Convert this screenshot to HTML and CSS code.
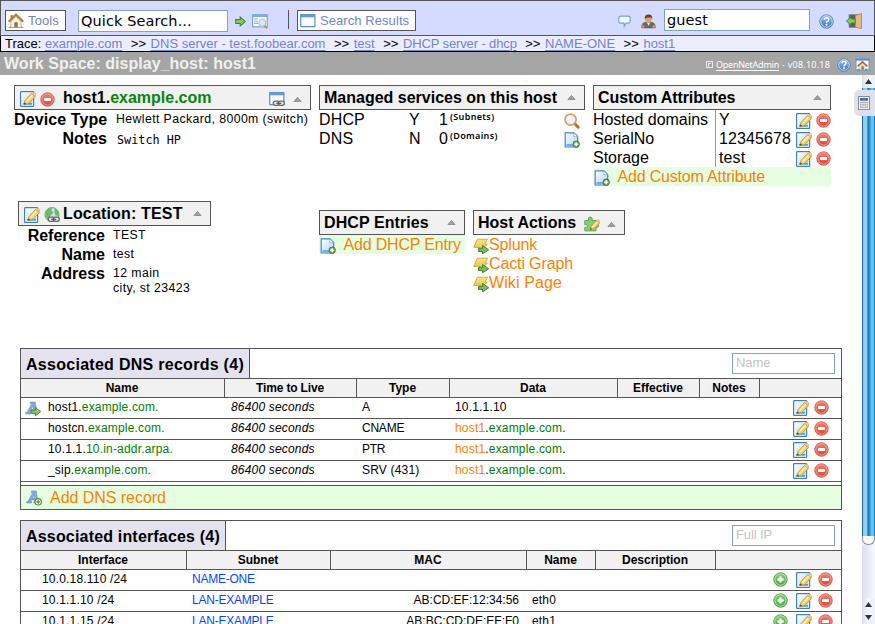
FILE: index.html
```html
<!DOCTYPE html>
<html lang="en">
<head>
<meta charset="utf-8">
<title>Work Space: display_host: host1</title>
<link rel="stylesheet" href="styles.css">
</head>
<body>
<svg class="defs" width="0" height="0">
  <defs>
    <linearGradient id="g-red" x1="0" y1="0" x2="0" y2="1"><stop offset="0" stop-color="#f0816f"/><stop offset="1" stop-color="#dd4437"/></linearGradient>
    <linearGradient id="g-green" x1="0" y1="0" x2="0" y2="1"><stop offset="0" stop-color="#8ccf78"/><stop offset="1" stop-color="#46a13b"/></linearGradient>
    <linearGradient id="g-blue" x1="0" y1="0" x2="0" y2="1"><stop offset="0" stop-color="#8fbbe9"/><stop offset="1" stop-color="#3c78bd"/></linearGradient>
    <linearGradient id="g-page" x1="0" y1="0" x2="1" y2="1"><stop offset="0" stop-color="#ffffff"/><stop offset="1" stop-color="#a8d4fa"/></linearGradient>
    <linearGradient id="g-gold" x1="0" y1="0" x2="0" y2="1"><stop offset="0" stop-color="#fbe680"/><stop offset="1" stop-color="#e6b93a"/></linearGradient>
    <symbol id="pencil" viewBox="0 0 16 16">
      <path d="M4 13.6 5 9.6 11.6 2.4 15.4 5.6 8.6 12.6Z" fill="#f7d262" stroke="#c28d2e" stroke-width=".8"/>
      <path d="M6.6 10.6 12.8 4" stroke="#fdf2b8" stroke-width="1.4"/>
      <path d="M11.6 2.4 12.6 1.4Q14 .8 15.5 2.4 16.6 4.2 15.4 5.6Z" fill="#f6c69a" stroke="#c9a06a" stroke-width=".5"/>
      <path d="M4 13.6 4.6 11.4 6.2 13Z" fill="#333"/>
    </symbol>
    <symbol id="edit" viewBox="0 0 16 16">
      <rect x=".6" y=".6" width="13" height="14.8" rx=".6" fill="#fff" stroke="#3f7fca" stroke-width="1.2"/>
      <rect x="2" y="2" width="10.4" height="12" fill="url(#g-page)"/>
      <path d="M3 12.8H12" stroke="#3ba3ee" stroke-width="1.6"/>
      <use href="#pencil"/>
    </symbol>
    <symbol id="del" viewBox="0 0 16 16">
      <circle cx="8" cy="8" r="7.2" fill="url(#g-red)" stroke="#cd5548" stroke-width=".9"/>
      <circle cx="8" cy="8" r="6" fill="none" stroke="#f7b1a6" stroke-width=".8"/>
      <rect x="4.3" y="6.5" width="7.4" height="3" rx=".4" fill="#fff"/>
    </symbol>
    <symbol id="add" viewBox="0 0 16 16">
      <circle cx="8" cy="8" r="7.2" fill="url(#g-green)" stroke="#4c9846" stroke-width=".9"/>
      <circle cx="8" cy="8" r="6" fill="none" stroke="#c3e9b8" stroke-width=".9"/>
      <path d="M8 4.7V11.3M4.7 8H11.3" stroke="#fff" stroke-width="2.5"/>
    </symbol>
    <symbol id="page-add" viewBox="0 0 16 16">
      <path d="M1.2.8H10L13.7 4.5V15H1.2Z" fill="url(#g-page)" stroke="#4b83c4" stroke-width="1.2"/>
      <path d="M9.8 1V4.7H13.5" fill="#fff" stroke="#7ba8da" stroke-width=".8"/>
      <path d="M2.5 13H9" stroke="#3ba3ee" stroke-width="1.5"/>
      <circle cx="12.2" cy="12.2" r="3.2" fill="#76a548" stroke="#48752a" stroke-width=".9"/>
      <path d="M12.2 10.2V14.2M10.2 12.2H14.2" stroke="#fff" stroke-width="1.5"/>
    </symbol>
    <symbol id="chain" viewBox="0 0 16 16">
      <rect x="4.3" y="10.2" width="6" height="4.2" rx="2.1" fill="#eee" stroke="#666" stroke-width="1.3"/>
      <rect x="9.3" y="10.2" width="6" height="4.2" rx="2.1" fill="#eee" stroke="#666" stroke-width="1.3"/>
      <path d="M7.3 12.3H12.3" stroke="#555" stroke-width="1.3"/>
    </symbol>
    <symbol id="window" viewBox="0 0 16 16">
      <rect x=".7" y="1.7" width="14.2" height="12" rx=".4" fill="#f8fbff" stroke="#5b8fd0" stroke-width="1.2"/>
      <rect x=".5" y="1.3" width="14.6" height="3" fill="#6599dc"/>
    </symbol>
    <symbol id="window-link" viewBox="0 0 16 16"><use href="#window"/><use href="#chain"/></symbol>
    <symbol id="globe" viewBox="0 0 16 16">
      <circle cx="8" cy="7.6" r="7" fill="#c4e4f0" stroke="#5da35c" stroke-width="1"/>
      <path d="M1.5 5Q3.6 1 8 .9L7.4 3.4 9.5 5.5 6.6 8.5 4.4 12.8Q.6 9.8 1.5 5ZM10.5 1.3Q15.6 4 14.8 9L11.5 8.5 10.5 5.5Z" fill="#6fbb66"/>
      <use href="#chain"/>
    </symbol>
    <symbol id="lens" viewBox="0 0 16 16">
      <path d="M10.8 10.8 14.2 14.2" stroke="#b9732f" stroke-width="3" stroke-linecap="round"/>
      <circle cx="6.6" cy="6.6" r="5.5" fill="#eaf1f9" stroke="#d6a163" stroke-width="1.7"/>
      <path d="M3.6 6.5Q4 3.6 7 3.5" fill="none" stroke="#fff" stroke-width="1.3"/>
    </symbol>
    <symbol id="go" viewBox="0 0 16 16">
      <path d="M1 5H7.5V1.4L15 8 7.5 14.6V11H1Z" fill="#86c862" stroke="#3c8535" stroke-width="1.5"/>
    </symbol>
    <symbol id="bolt" viewBox="0 0 16 16">
      <path d="M4.4 1.2H14.6L12 6.2H14.4L5.6 13.8 7 9.4H.8Z" fill="url(#g-gold)" stroke="#cba53a" stroke-width=".9"/>
      <path d="M5.6 10.3H9.6V7.5L15.7 11.8 9.6 15.8V13.4H5.6Z" fill="#7dbb5c" stroke="#3f7f35" stroke-width="1"/>
    </symbol>
    <symbol id="letter" viewBox="0 0 16 16">
      <path d="M5.4 1H10.3L11.9 11.3H12.8V13H7.9V11.4H9L8.8 9.9H5.5L4.7 11.4H5.7V13H.6V11.4H1.8L6.8 2.7H5.4ZM6.5 8.1H8.6L8.1 4.9Z" fill="#81a9de" fill-rule="evenodd" stroke="#6a95d0" stroke-width=".6"/>
    </symbol>
    <symbol id="a-go" viewBox="0 0 16 16"><use href="#letter"/><path d="M6 9.2H10.3V6.5L15.7 10.7 10.3 14.9V12.2H6Z" fill="#86c862" stroke="#4a7d35" stroke-width=".9"/></symbol>
    <symbol id="a-add" viewBox="0 0 16 16"><use href="#letter"/><circle cx="12.2" cy="11.8" r="3.2" fill="#fff" stroke="#5c8a35" stroke-width="1.2"/><path d="M12.2 9.9V13.7M10.3 11.8H14.1" stroke="#5c8a35" stroke-width="1.3"/></symbol>
    <symbol id="puzzle" viewBox="0 0 16 16">
      <path d="M.8 4.6H4.6Q3.6 1 6.3 1 9 1 8 4.6H12V8.2Q14.8 7.6 14.6 9.8 14.4 12 12 11V14.8H.8V11.3Q3.6 12 3.6 10 3.6 8 .8 8.7Z" fill="#86cc78" stroke="#5aa855" stroke-width="1"/>
      <svg x="3" y="2.4" width="13" height="13.4" viewBox="0 0 16 16"><use href="#pencil"/></svg>
    </symbol>
    <symbol id="house" viewBox="0 0 16 16">
      <path d="M0 15Q3 12 8 12.6 13 12 16 15Z" fill="#63a944"/>
      <path d="M3 8 8 3.5 13 8V14.5H3Z" fill="#fbf6ea" stroke="#b99c6c" stroke-width=".7"/>
      <path d="M.8 8.6 8 1.8 15.2 8.6" fill="none" stroke="#b07c44" stroke-width="2.2"/>
      <path d="M2.6 2H4.8V5L2.6 7Z" fill="#b67a45"/>
      <path d="M6.3 14.5V9.8Q8 8 9.7 9.8V14.5Z" fill="#a86c33"/>
    </symbol>
    <symbol id="search-list" viewBox="0 0 16 16">
      <rect x=".6" y=".8" width="14.6" height="12" fill="#fff" stroke="#6c9fd8" stroke-width="1.1"/>
      <rect x=".4" y=".4" width="15" height="2.6" fill="#7eace0"/>
      <path d="M2 5H6M2 7.2H6M2 9.4H6" stroke="#8cb0dc" stroke-width="1.1"/>
      <path d="M12.6 11.6 15 14.4" stroke="#c98b4a" stroke-width="2"/>
      <circle cx="10.3" cy="8.8" r="3.6" fill="#d7e9f9" stroke="#a5bbd2" stroke-width="1"/>
    </symbol>
    <symbol id="bubble" viewBox="0 0 16 16">
      <path d="M3.4 1.4H12.6Q15 1.4 15 4V7.3Q15 10 12.6 10H10L7.6 14 7.4 10H3.4Q1 10 1 7.3V4Q1 1.4 3.4 1.4Z" fill="#f3f9ff" stroke="#6fa3dc" stroke-width="1.4"/>
    </symbol>
    <symbol id="user" viewBox="0 0 16 16">
      <path d="M.8 14.8Q.8 9.6 4 9H12Q15.2 9.6 15.2 14.8Z" fill="#6a6a6c" stroke="#555" stroke-width=".7"/>
      <path d="M6.4 9H9.6L8 12.6Z" fill="#fff"/>
      <ellipse cx="8" cy="5.4" rx="3.5" ry="4.2" fill="#e0a06c"/>
      <path d="M4 5.6Q3.4.4 8 .4 12.6.4 12 5.6L11 3.6 6.6 3.6 5 4.4Z" fill="#6b3f1e"/>
      <circle cx="2.2" cy="13.4" r="1.7" fill="#d88c4e"/><circle cx="13.8" cy="13.4" r="1.7" fill="#d88c4e"/>
    </symbol>
    <symbol id="help" viewBox="0 0 16 16">
      <circle cx="8" cy="8" r="7.2" fill="url(#g-blue)" stroke="#4b7db5" stroke-width=".9"/>
      <circle cx="8" cy="8" r="6.1" fill="none" stroke="#dbe8f8" stroke-width=".9"/>
      <path d="M5.6 6.2Q5.8 4 8 4 10.4 4 10.4 6 10.4 7.2 8.9 7.9 8 8.3 8 9.3" fill="none" stroke="#fff" stroke-width="1.7"/>
      <circle cx="8" cy="11.5" r="1.1" fill="#fff"/>
    </symbol>
    <symbol id="exit" viewBox="0 0 16 16">
      <path d="M3 1.5H15V14.5H3Z" fill="#56606b" stroke="#8a8f96" stroke-width=".8"/>
      <path d="M9.4 2.6 15.5.4V15.6L9.4 14.2Z" fill="#e8b97c" stroke="#b98747" stroke-width=".8"/>
      <path d="M.4 8 5 3.8V6H9.2V10H5V12.2Z" fill="#86c862" stroke="#3c8535" stroke-width=".9"/>
    </symbol>
    <symbol id="home-window" viewBox="0 0 16 16">
      <rect x=".6" y="1.2" width="14.8" height="13" fill="#fff" stroke="#6599dc" stroke-width="1.2"/>
      <rect x=".2" y=".8" width="15.6" height="2.2" fill="#5a8ed6"/>
      <path d="M4 9V13.5H12V9L8 5Z" fill="#f2dfc0"/>
      <path d="M2.4 9.6 8 4.4 13.6 9.6" fill="none" stroke="#a66e35" stroke-width="1.9"/>
      <rect x="6.8" y="9.4" width="2.6" height="4.1" fill="#a66e35"/>
      <path d="M2 13.2H5.4M10.6 13.2H14" stroke="#63a944" stroke-width="1.6"/>
    </symbol>
    <symbol id="calc" viewBox="0 0 12 14">
      <rect x=".5" y=".5" width="11" height="13" fill="#f4f4f4" stroke="#8c8c8c"/>
      <rect x="2" y="2" width="8" height="2.8" fill="#3f72c4"/>
      <path d="M2 6.6H8M2 8.9H8M2 11.2H8" stroke="#8e8e8e" stroke-width="1.3" stroke-dasharray="1.5 .7"/>
      <path d="M8.6 6.6H10M8.6 8.9H10" stroke="#dd6a5c" stroke-width="1.4"/>
      <path d="M8.6 11.2H10" stroke="#8e8e8e" stroke-width="1.3"/>
    </symbol>
    <symbol id="fold" viewBox="0 0 8 5"><path d="M4 .4 7.6 4.5H.4Z" fill="#a2a2a2" stroke="#7b7b7b" stroke-width=".7"/></symbol>
    <symbol id="tri" viewBox="0 0 7 5"><path d="M3.5 0 7 5H0Z" fill="#333"/></symbol>
  </defs>
</svg>

<div class="page">
  <header class="toolbar">
    <a class="btn btn-tools"><svg class="i16"><use href="#house"/></svg><span class="t-tools">Tools</span></a>
    <div class="field field-search">Quick Search...</div>
    <svg class="i-go"><use href="#go"/></svg>
    <svg class="i16 i-list"><use href="#search-list"/></svg>
    <span class="divider"></span>
    <a class="btn btn-results"><svg class="i16"><use href="#window"/></svg><span>Search Results</span></a>
    <span class="spacer"></span>
    <svg class="i-bubble"><use href="#bubble"/></svg>
    <svg class="i-user"><use href="#user"/></svg>
    <div class="field field-user">guest</div>
    <svg class="i15 i-help"><use href="#help"/></svg>
    <svg class="i16 i-exit"><use href="#exit"/></svg>
  </header>

  <nav class="trace">
    <span>Trace:</span><a>example.com</a><i>&gt;&gt;</i><a>DNS server - test.foobear.com</a><i>&gt;&gt;</i><a>test</a><i>&gt;&gt;</i><a class="tight">DHCP server - dhcp</a><i>&gt;&gt;</i><a>NAME-ONE</a><i>&gt;&gt;</i><a>host1</a>
  </nav>

  <div class="workbar">
    <h1>Work Space: display_host: host1</h1>
    <div class="version"><span class="copy"></span><a>OpenNetAdmin</a><span class="num">- v08.10.18</span><svg class="i14"><use href="#help"/></svg><svg class="i-home"><use href="#home-window"/></svg></div>
  </div>

  <div class="body">
    <main>
      <div class="panels">
        <div class="left">
          <section class="host">
            <h2><svg class="i16"><use href="#edit"/></svg><svg class="i15"><use href="#del"/></svg><span class="name">host1.<b>example.com</b></span><svg class="i16 link"><use href="#window-link"/></svg><svg class="fold"><use href="#fold"/></svg></h2>
            <dl>
              <dt class="w1">Device Type</dt><dd>Hewlett Packard, 8000m (switch)</dd>
              <dt>Notes</dt><dd class="mono">Switch HP</dd>
            </dl>
          </section>
          <section class="location">
            <h2><svg class="i16"><use href="#edit"/></svg><svg class="i16"><use href="#globe"/></svg><span class="name">Location: TEST</span><svg class="fold"><use href="#fold"/></svg></h2>
            <dl>
              <dt>Reference</dt><dd>TEST</dd>
              <dt>Name</dt><dd>test</dd>
              <dt>Address</dt><dd>12 main<br>city, st 23423</dd>
            </dl>
          </section>
        </div>
        <div class="right">
          <div class="row-top">
            <section class="services">
              <h2><span>Managed services on this host</span><svg class="fold"><use href="#fold"/></svg></h2>
              <div class="svc"><span>DHCP</span><span>Y</span><span>1</span><small>(Subnets)</small><svg class="i16"><use href="#lens"/></svg></div>
              <div class="svc"><span>DNS</span><span>N</span><span>0</span><small>(Domains)</small><svg class="i16"><use href="#page-add"/></svg></div>
            </section>
            <section class="attrs">
              <h2><span class="tight">Custom Attributes</span><svg class="fold"><use href="#fold"/></svg></h2>
              <div class="attr"><span>Hosted domains</span><span class="val">Y</span><svg class="i16"><use href="#edit"/></svg><svg class="i15"><use href="#del"/></svg></div>
              <div class="attr"><span>SerialNo</span><span class="val">12345678</span><svg class="i16"><use href="#edit"/></svg><svg class="i15"><use href="#del"/></svg></div>
              <div class="attr"><span>Storage</span><span class="val">test</span><svg class="i16"><use href="#edit"/></svg><svg class="i15"><use href="#del"/></svg></div>
              <div class="addrow"><svg class="i16"><use href="#page-add"/></svg><a>Add Custom Attribute</a></div>
            </section>
          </div>
          <div class="row-bottom">
            <section class="dhcp">
              <h2><span>DHCP Entries</span><svg class="fold"><use href="#fold"/></svg></h2>
              <div class="addrow"><svg class="i16"><use href="#page-add"/></svg><a>Add DHCP Entry</a></div>
            </section>
            <section class="actions">
              <h2><span>Host Actions</span><svg class="i16"><use href="#puzzle"/></svg><svg class="fold"><use href="#fold"/></svg></h2>
              <div class="action"><svg class="i16"><use href="#bolt"/></svg><a>Splunk</a></div>
              <div class="action"><svg class="i16"><use href="#bolt"/></svg><a>Cacti Graph</a></div>
              <div class="action"><svg class="i16"><use href="#bolt"/></svg><a class="wide">Wiki Page</a></div>
            </section>
          </div>
        </div>
      </div>

      <section class="list dns">
        <div class="list-top"><h3>Associated DNS records (4)</h3><div class="filter">Name</div></div>
        <div class="cols head"><span>Name</span><span class="ttl">Time to Live</span><span>Type</span><span>Data</span><span>Effective</span><span>Notes</span><span></span></div>
        <div class="cols rec"><span class="rname"><svg class="i16"><use href="#a-go"/></svg>host1.<b>example.com.</b></span><em>86400 seconds</em><span>A</span><span>10.1.1.10</span><div class="tools"><svg class="i16"><use href="#edit"/></svg><svg class="i15"><use href="#del"/></svg></div></div>
        <div class="cols rec"><span class="rname">hostcn.<b>example.com.</b></span><em>86400 seconds</em><span class="caps">CNAME</span><span><a>host1</a>.<b>example.com</b>.</span><div class="tools"><svg class="i16"><use href="#edit"/></svg><svg class="i15"><use href="#del"/></svg></div></div>
        <div class="cols rec"><span class="rname">10.1.1.<b>10.in-addr.arpa.</b></span><em>86400 seconds</em><span class="caps">PTR</span><span><a>host1</a>.<b>example.com</b>.</span><div class="tools"><svg class="i16"><use href="#edit"/></svg><svg class="i15"><use href="#del"/></svg></div></div>
        <div class="cols rec"><span class="rname">_sip.<b>example.com.</b></span><em>86400 seconds</em><span>SRV (431)</span><span><a>host1</a>.<b>example.com</b>.</span><div class="tools"><svg class="i16"><use href="#edit"/></svg><svg class="i15"><use href="#del"/></svg></div></div>
        <div class="list-add"><svg class="i16"><use href="#a-add"/></svg><a>Add DNS record</a></div>
      </section>

      <section class="list ifaces">
        <div class="list-top"><h3>Associated interfaces (4)</h3><div class="filter">Full IP</div></div>
        <div class="cols head"><span>Interface</span><span>Subnet</span><span>MAC</span><span>Name</span><span>Description</span><span></span></div>
        <div class="cols rec"><span class="ip">10.0.18.110 /24</span><a class="caps">NAME-ONE</a><span class="mac"></span><span></span><div class="tools"><svg class="i15"><use href="#add"/></svg><svg class="i16"><use href="#edit"/></svg><svg class="i15"><use href="#del"/></svg></div></div>
        <div class="cols rec"><span class="ip">10.1.1.10 /24</span><a class="caps">LAN-EXAMPLE</a><span class="mac">AB:CD:EF:12:34:56</span><span>eth0</span><div class="tools"><svg class="i15"><use href="#add"/></svg><svg class="i16"><use href="#edit"/></svg><svg class="i15"><use href="#del"/></svg></div></div>
        <div class="cols rec"><span class="ip">10.1.1.15 /24</span><a class="caps">LAN-EXAMPLE</a><span class="mac">AB:BC:CD:DE:EF:F0</span><span>eth1</span><div class="tools"><svg class="i15"><use href="#add"/></svg><svg class="i16"><use href="#edit"/></svg><svg class="i15"><use href="#del"/></svg></div></div>
      </section>
    </main>

    <aside class="scroll">
      <div class="sbtn"><svg class="tri"><use href="#tri"/></svg></div>
      <div class="thumb"></div>
      <div class="cap"></div>
      <div class="track"></div>
      <div class="sbtn"><svg class="tri"><use href="#tri"/></svg></div>
      <div class="sbtn"><svg class="tri down"><use href="#tri"/></svg></div>
      <div class="calc"><svg><use href="#calc"/></svg></div>
    </aside>
  </div>
</div>
</body>
</html>
```
FILE: styles.css
```css
* { box-sizing: border-box; }
html, body { margin: 0; overflow: hidden; }
body { width: 875px; height: 624px; background: #fff; color: #000; font: 16px/19px "Liberation Sans", Arial, sans-serif; }
h1, h2, h3, dl, dd { margin: 0; }
svg { display: block; flex: none; }
b, em, i { font-weight: normal; }
i { font-style: normal; }
.defs { position: absolute; }
.i16 { width: 16px; height: 16px; }
.i15 { width: 15px; height: 15px; }
.i14 { width: 14px; height: 14px; }
.spacer { flex: 1; }
.page { display: flex; flex-direction: column; width: 875px; height: 624px; overflow: hidden; }

/* toolbar */
.toolbar { display: flex; align-items: flex-start; height: 36px; border: 1px solid #555; background: #d4dbff; padding: 9px 12px 0 4px; }
.btn { display: flex; align-items: center; height: 21px; border: 1px solid #555; background: #fff; color: #7482d0; font-size: 13px; line-height: 19px; letter-spacing: .07px; }
.btn-tools { width: 61px; padding-left: 2px; gap: 4px; letter-spacing: .13px; }
.btn-results { width: 119px; margin-left: 8px; padding-left: 2px; gap: 4px; }
.field { border: 1px solid #7fa7bb; background: #fff; height: 22px; font: 14.5px/20px "DejaVu Sans", sans-serif; letter-spacing: .1px; padding-left: 2px; }
.field-search { width: 150px; margin-left: 12px; }
.i-go { width: 11px; height: 11px; margin: 6px 0 0 7px; }
.i-list { margin: 4px 0 0 6px; }
.divider { width: 1px; height: 19px; margin: 0 0 0 20px; background: #555; }
.i-bubble { width: 13px; height: 13px; margin: 5px 10px 0 0; }
.i-user { width: 15px; height: 15px; margin: 4px 8px 0 0; }
.field-user { width: 146px; margin-top: -1px; }
.i-help { margin: 4px 12px 0 9px; }
.i-exit { margin-top: 3px; }

/* breadcrumb */
.trace { display: flex; height: 16px; border: 1px solid #000; border-top: 0; background: #ecedff; padding-left: 4px; font-size: 13px; line-height: 15px; white-space: pre; }
.trace span { width: 40px; }
.trace a { color: #7482d0; text-decoration: underline; text-underline-offset: 2px; text-decoration-thickness: 1px; }
.trace a.tight { letter-spacing: -.13px; }
.trace i { width: 28.3px; padding-left: 8.5px; }

/* title strip */
.workbar { display: flex; justify-content: space-between; height: 23px; background: #a5a5a5; color: #f0f0f0; padding: 0 5px 0 4px; }
.workbar h1 { font-size: 16px; line-height: 23px; letter-spacing: .02px; }
.version { display: flex; align-items: center; color: #fff; font: 9px/23px "Noto Sans", sans-serif; padding-top: 2px; }
.copy { width: 7px; height: 7px; border: 1px solid #e8e8e8; margin-right: 3px; display: flex; }
.copy::after { content: ""; width: 3px; height: 3px; margin: 1px; border: 1px solid #e8e8e8; border-right: 0; }
.version a { width: 63px; letter-spacing: -.25px; text-decoration: underline; text-underline-offset: 2px; }
.version .num { width: 49px; margin: 0 6px 0 3px; letter-spacing: .23px; }
.i-home { width: 15px; height: 14px; margin-left: 4px; }

/* panels */
.body { display: flex; flex: 1; min-height: 0; }
main { width: 862px; overflow: hidden; }
.panels { display: flex; gap: 8px; height: 273px; padding: 10px 0 0 14px; }
.left { width: 297px; }
.host { height: 116px; }
.location { width: 193px; margin-left: 4px; }
h2 { display: flex; align-items: center; height: 25px; border: 1px solid #555; background: #f1f1f1; font-size: 16px; line-height: 23px; padding: 0 8px 0 4px; white-space: nowrap; }
h2 .i16, h2 .i15 { margin-top: 3px; }
.fold { width: 9px; height: 5px; margin-left: auto; }
.host h2 .i16:first-child, .location h2 .i16:first-child { margin-left: 1px; }
.host h2 .i15 { margin-left: 4px; }
.host h2 .fold { margin: 4px 0 0 8px; }
.host h2 .link { margin-left: auto; }
.host .name { margin-left: 8px; }
.host .name b { font-weight: bold; color: #0b840b; }
.location h2 .i16 + .i16 { margin-left: 4px; }
.location .name { margin-left: 3px; letter-spacing: .16px; }
dl { display: grid; grid-template-columns: 93px 1fr; column-gap: 9px; }
.location dl { grid-template-columns: 87px 1fr; column-gap: 8px; }
dt { font-weight: bold; text-align: right; white-space: nowrap; }
.w1 { letter-spacing: .1px; }
dd { font-size: 12.3px; line-height: 15px; padding-top: 2px; letter-spacing: .4px; white-space: nowrap; }
dd.mono { font: 11.8px/15px "DejaVu Sans Mono", monospace; letter-spacing: 0; padding-top: 4px; padding-left: 1px; }
.row-top, .row-bottom { display: flex; gap: 8px; align-items: flex-start; }
.row-top { height: 125px; }
.services { width: 266px; }
.attrs { width: 238px; }
.dhcp { width: 146px; }
.dhcp h2 span { letter-spacing: .08px; }
.actions { width: 152px; }
.actions h2 .i16 { margin-left: 8px; }
.actions h2 .fold { margin-top: 4px; }
h2 span.tight { letter-spacing: -.09px; }
.svc { display: grid; grid-template-columns: 90px 30px 11px 114px 16px; height: 19px; }
.svc span:first-child { letter-spacing: .15px; }
.svc small { font: 600 9px/14px "Noto Sans", sans-serif; letter-spacing: .35px; }
.svc svg { margin-top: 3px; }
.attr { display: grid; grid-template-columns: 122px 81px 20px 15px; height: 19px; letter-spacing: -.04px; }
.attr .val { border-left: 1px solid #999; padding-left: 3px; letter-spacing: .1px; }
.attr .i16, .attr .i15 { margin-top: 3px; }
.addrow { display: flex; height: 19px; background: #e6ffe0; color: #ff8000; letter-spacing: -.18px; }
.addrow svg { margin: 3px 7.5px 0 1px; }
.action { display: flex; height: 19px; color: #ff8000; letter-spacing: -.13px; }
.action .wide { letter-spacing: .1px; }
.action svg { margin-top: 3px; }

/* record lists */
.list { width: 822px; margin-left: 20px; border: 1px solid #555; font-size: 12px; letter-spacing: .18px; }
.list + .list { margin-top: 10px; }
.list-top { display: flex; justify-content: space-between; height: 30px; border-bottom: 1px solid #555; }
h3 { height: 29px; background: #e5e2f0; border-right: 1px solid #555; font-size: 16px; line-height: 31px; padding-left: 5px; letter-spacing: .28px; }
.dns h3 { width: 229px; }
.ifaces h3 { width: 205px; letter-spacing: .18px; }
.filter { width: 103px; height: 21px; margin: 4px 6px 0 0; border: 1px solid #7fa7bb; color: #c4c4c4; font-size: 13px; line-height: 18px; padding-left: 3px; letter-spacing: -.1px; }
.cols { display: grid; height: 21px; border-bottom: 1px solid #555; }
.dns .cols { grid-template-columns: 204px 132px 93px 168px 82px 60px 81px; }
.ifaces .cols { grid-template-columns: 166px 144px 196px 69px 120px 125px; }
.cols.head { height: 19px; background: #f1f1f1; font-weight: bold; line-height: 19px; text-align: center; letter-spacing: 0; }
.head span { border-right: 1px solid #555; padding-right: 1px; }
.head span:last-child { border-right: 0; }
.head .ttl { letter-spacing: -.15px; }
.rec { line-height: 18px; white-space: nowrap; }
.rec > * { padding-left: 5px; }
.rec b { color: #008000; }
.dns .rec a { color: #ff8000; }
.ifaces .rec a { color: #0645ff; }
.rec em { padding-left: 6px; }
.rec .rname { position: relative; padding-left: 27px; }
.rname svg { position: absolute; left: 4px; top: 3px; }
.caps { letter-spacing: -.23px; }
.tools { display: flex; padding: 2px 0 0; grid-column: -2; justify-content: flex-end; }
.dns .tools { padding-right: 12px; gap: 6px; }
.ifaces .tools { padding-right: 8px; gap: 7px; }
.tools .i16 { margin-right: -1px; margin-left: 1px; }
.ip { padding-left: 21px !important; }
.mac { text-align: right; padding-right: 8px; letter-spacing: 0; }
.list-add { display: flex; height: 27px; padding-left: 5px; background: linear-gradient(#fff 3px, #555 3px, #555 4px, #e6ffe0 4px); color: #ff8000; font-size: 16px; letter-spacing: -.04px; }
.list-add svg { margin: 8px 8px 0 0; }
.list-add a { line-height: 24px; padding-top: 4px; }

/* scrollbar */
.scroll { position: relative; display: flex; flex-direction: column; width: 13px; background: #f2f2fb; }
.sbtn { display: flex; align-items: center; justify-content: center; height: 13px; background: linear-gradient(90deg, #dcdde8, #f6f6fd 50%, #eeeef8); }
.tri { width: 7px; height: 5px; }
.tri.down { transform: rotate(180deg); }
.thumb { height: 448px; background: linear-gradient(90deg, #2a62a8 0 1px, #9bc9dd 1px 2px, #8fd3ea 2px 5px, #3aa0d8 5px 6px, #2174bd 6px 7px, #2b95d6 7px 8px, #3aa9e0 8px 9px, #5ccaec 9px 12px, #2a78bb 12px); }
.cap { height: 9px; border: 1px solid #8f909c; border-top: 0; border-radius: 0 0 6px 6px; background: #f6f6fb; }
.track { flex: 1; background: linear-gradient(90deg, #dedeee, #f8f8ff); }
.calc { position: absolute; left: -8px; top: 15px; width: 21px; height: 26px; border-radius: 5px 0 0 5px; background: #e0dfee; padding: 6px 0 0 4px; }
.calc svg { width: 12px; height: 14px; }
```
